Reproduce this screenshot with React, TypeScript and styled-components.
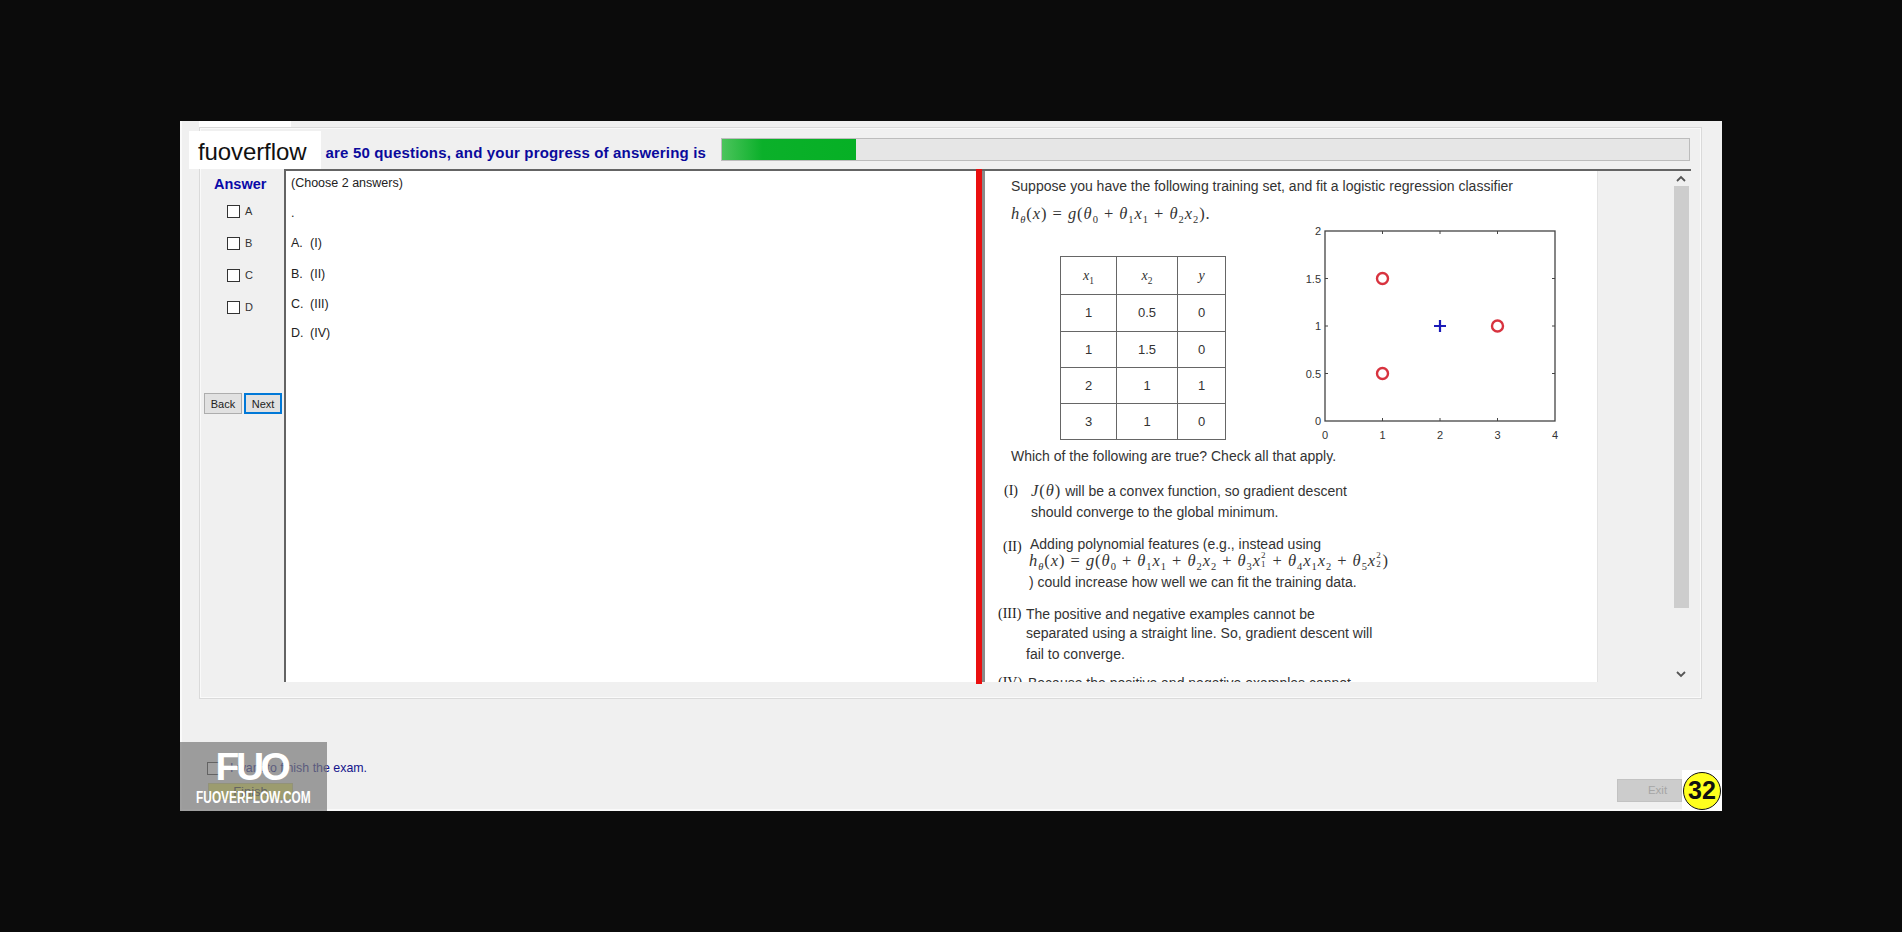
import React from "react";
import styled, { createGlobalStyle } from "styled-components";

const Global = createGlobalStyle`
  html, body { margin: 0; padding: 0; background: #0b0b0b; }
  body { font-family: "Liberation Sans", Arial, sans-serif; }
  * { box-sizing: border-box; }
`;
const Page = styled.div`
  width: 1902px; height: 932px; background: #0b0b0b; padding: 121px 180px 121px 180px; overflow: hidden;
`;
const Win = styled.div`
  position: relative; width: 1542px; height: 690px; background: #f0f0f0; display: flex; flex-direction: column;
  border-left: 2px solid #fafafa; border-bottom: 2px solid #fafafa;
`;
const TabStrip = styled.div`
  height: 6px; padding-left: 17px; flex: none;
`;
const Tab = styled.div`
  width: 92px; height: 6px; background: #fff;
`;
const TabPanel = styled.div`
  flex: none; height: 572px; margin: 0 20px 0 17px; border: 1px solid #dadada; box-shadow: inset 0 0 0 1px #fafafa;
  display: flex; flex-direction: column; padding: 2px 10px 16px 5px;
`;
const Header = styled.div`
  height: 39px; flex: none; display: flex; align-items: flex-start; padding-top: 8px;
`;
const HeaderText = styled.div`
  width: 501px; text-align: right; color: #0a0a9c; font-size: 15px; font-weight: 700; line-height: 18px;
  padding-top: 6px; letter-spacing: 0.17px; white-space: nowrap; overflow: hidden;
`;
const Progress = styled.div`
  margin-left: 15px; width: 969px; height: 23px; background: #e6e6e6; border: 1px solid #bcbcbc;
`;
const ProgressFill = styled.div`
  height: 100%; background: linear-gradient(90deg, #4cc45c 0%, #0bb02a 30%, #06b025 100%);
`;
const Main = styled.div`
  flex: 1; min-height: 0; display: flex;
`;
const AnswerCol = styled.div`
  width: 79px; flex: none; display: flex; flex-direction: column; padding-top: 7px;
`;
const AnswerTitle = styled.div`
  color: #0a0aa8; font-weight: 700; font-size: 14.5px; line-height: 16px; padding-left: 9px; margin-bottom: 12px;
`;
const Choice = styled.div`
  display: flex; align-items: center; height: 14px; margin: 0 0 18px 22px; gap: 5px;
  font-size: 11px; color: #333;
`;
const Box = styled.span`
  width: 13px; height: 13px; border: 1px solid #333; background: #fff; display: block; flex: none;
`;
const NavRow = styled.div`
  display: flex; gap: 2px; margin-top: 61px; margin-left: -1px;
`;
const NavBtn = styled.div<{ $focus?: boolean }>`
  width: 38px; height: 21px; background: #e1e1e1; border: ${(p) => (p.$focus ? "2px solid #0078d7" : "1px solid #adadad")};
  font-size: 11px; color: #222; display: flex; align-items: center; justify-content: center;
`;
const Question = styled.div`
  width: 692px; flex: none; background: #fff; border-left: 2px solid #646464; border-top: 2px solid #646464;
  padding: 3px 0 0 5px; font-size: 12.5px; color: #222;
`;
const QLine = styled.div<{ $h: number }>`
  height: ${(p) => p.$h}px; line-height: 18px; white-space: nowrap;
`;
const QKey = styled.span`
  display: inline-block; width: 19px;
`;
const Splitter = styled.div`
  width: 6px; flex: none; background: #ea0f0f; margin-bottom: -2px;
`;
const Viewer = styled.div`
  flex: 1; min-width: 0; display: flex; border-top: 2px solid #646464;
  overflow: hidden;
`;
const Sheet = styled.div`
  width: 616px; flex: none; background: #fff; border-left: 3px solid #8a8a8a; border-right: 1px solid #e3e3e3;
  overflow: hidden; color: #333; font-size: 14px; display: flex; flex-direction: column;
`;
const TextLine = styled.div<{ $top: number; $left: number }>`
  flex: none; height: 18px; line-height: 18px; margin-top: ${(p) => p.$top}px; padding-left: ${(p) => p.$left}px;
  white-space: nowrap; position: relative;
`;
const Roman = styled.span`
  position: absolute; font-family: "Liberation Serif", serif; font-size: 14px; color: #222;
`;
const MathText = styled.span`
  font-family: "Liberation Serif", serif; font-size: 16.5px; color: #333; letter-spacing: 0.95px;
  sub, sup { font-size: 10.5px; line-height: 0; }
  i { font-style: italic; }
`;
const Stack = styled.span`
  display: inline-flex; flex-direction: column; vertical-align: middle; font-size: 9px; line-height: 9px; margin: -4px 1px 0 0;
`;
const Figure = styled.div`
  flex: none; display: flex; height: 220px; margin-top: 2px; padding-left: 75px;
`;
const DataTable = styled.table`
  border-collapse: collapse; width: 165px; height: 184px; margin-top: 31px; flex: none; table-layout: fixed;
  border: 1.5px solid #333;
  td { border: 1px solid #666; text-align: center; font-size: 13px; color: #333; padding: 0; }
`;
const HeadCell = styled.td`
  font-family: "Liberation Serif", serif; font-style: italic; font-size: 14px !important;
  sub { font-size: 9.5px; line-height: 0; font-style: normal; }
`;
const PlotSvg = styled.svg`
  flex: none; margin-left: 73px; display: block;
`;
const ScrollArea = styled.div`
  flex: 1; background: #f0f0f0; display: flex; justify-content: flex-end; padding-right: 2px;
`;
const ScrollBar = styled.div`
  width: 16px; display: flex; flex-direction: column; align-items: center; color: #555;
`;
const ScrollBtn = styled.div`
  height: 15px; flex: none; display: flex; align-items: center; justify-content: center;
`;
const Thumb = styled.div`
  height: 422px; width: 15px; background: #cdcdcd; flex: none;
`;
const Spacer = styled.div`
  flex: 1;
`;
const Bottom = styled.div`
  flex: 1; display: flex; justify-content: space-between; padding: 61px 40px 0 25px;
`;
const FinishCol = styled.div`
  display: flex; flex-direction: column;
`;
const FinishRow = styled.div`
  display: flex; align-items: center; gap: 10px; height: 16px; color: #14148c; font-size: 12.4px; white-space: nowrap;
`;
const FinishBtn = styled.div`
  width: 85px; height: 17px; margin: 7px 0 0 1px; background: #f2f25c; border: 1px solid #d0d080;
  font-size: 13px; color: #333; text-align: center; line-height: 15px;
`;
const ExitBtn = styled.div`
  align-self: flex-end; width: 65px; height: 23px; margin-bottom: 7px; background: #cccccc; border: 1px solid #c2c2c2;
  color: #a6a6a6; font-size: 11.5px; text-align: center; line-height: 21px; padding-left: 16px;
`;
const Watermark = styled.div`
  position: absolute; left: 7px; top: 10px; width: 132px; height: 38px; background: #fff; color: #111;
  font-size: 24px; line-height: 42px; padding-left: 9px; letter-spacing: -0.1px; overflow: hidden;
`;
const LogoOverlay = styled.div`
  position: absolute; left: -2px; bottom: -2px; width: 147px; height: 69px; background: rgba(120, 120, 120, 0.7);
  color: #fff; display: flex; flex-direction: column; align-items: center;
`;
const LogoBig = styled.div`
  font-size: 39px; font-weight: 700; line-height: 36px; height: 40px; margin-top: 7px; letter-spacing: -3.5px; padding-right: 4px;
`;
const LogoSmall = styled.div`
  font-weight: 700; font-size: 16px; line-height: 18px; white-space: nowrap; transform: scaleX(0.74);
`;
const BadgeBox = styled.div`
  position: absolute; right: 0; bottom: -2px; width: 40px; height: 41px; background: #fff;
  display: flex; align-items: center; justify-content: center;
`;
const Badge = styled.div`
  width: 38px; height: 38px; border-radius: 50%; background: #ffff1e; border: 1.5px solid #111; color: #111;
  font-weight: 700; font-size: 25px; display: flex; align-items: center; justify-content: center;
`;

const rows = [["1", "0.5", "0"], ["1", "1.5", "0"], ["2", "1", "1"], ["3", "1", "0"]];
const Chevron = ({ up }: { up?: boolean }) => (
  <svg width="10" height="7" viewBox="0 0 10 7">
    <path d={up ? "M1 6 L5 2 L9 6" : "M1 1 L5 5 L9 1"} fill="none" stroke="#555" strokeWidth="1.8" />
  </svg>
);

const Plot = () => {
  const X = (v: number) => 26 + v * 57.5;
  const Y = (v: number) => 196 - v * 95;
  const t = { fontFamily: "Liberation Sans", fontSize: 11, fill: "#333" };
  return (
    <PlotSvg width="270" height="220" viewBox="0 0 270 220">
      <rect x="26" y="6" width="230" height="190" fill="none" stroke="#444" strokeWidth="1.3" />
      {[1, 2, 3].map((v) => (
        <g key={v} stroke="#444">
          <line x1={X(v)} x2={X(v)} y1="196" y2="193" />
          <line x1={X(v)} x2={X(v)} y1="6" y2="9" />
        </g>
      ))}
      {[0.5, 1, 1.5].map((v) => (
        <g key={v} stroke="#444">
          <line x1="26" x2="29" y1={Y(v)} y2={Y(v)} />
          <line x1="256" x2="253" y1={Y(v)} y2={Y(v)} />
        </g>
      ))}
      {[0, 1, 2, 3, 4].map((v) => (
        <text key={v} x={X(v)} y="214" textAnchor="middle" {...t}>{v}</text>
      ))}
      {[["0", 0], ["0.5", 0.5], ["1", 1], ["1.5", 1.5], ["2", 2]].map(([l, v]) => (
        <text key={l as string} x="22" y={Y(v as number) + 4} textAnchor="end" {...t}>{l}</text>
      ))}
      {[[1, 1.5], [3, 1], [1, 0.5]].map(([a, b]) => (
        <circle key={`${a}${b}`} cx={X(a)} cy={Y(b)} r="5.5" fill="none" stroke="#d8333f" strokeWidth="2.4" />
      ))}
      <path d={`M${X(2) - 6} ${Y(1)} H${X(2) + 6} M${X(2)} ${Y(1) - 6} V${Y(1) + 6}`} stroke="#1a1ab8" strokeWidth="2.2" fill="none" />
    </PlotSvg>
  );
};

export default function App() {
  return (
    <Page>
      <Global />
      <Win>
        <TabStrip><Tab /></TabStrip>
        <TabPanel>
          <Header>
            <HeaderText>There are 50 questions, and your progress of answering is</HeaderText>
            <Progress><ProgressFill style={{ width: `${(134 / 967) * 100}%` }} /></Progress>
          </Header>
          <Main>
            <AnswerCol>
              <AnswerTitle>Answer</AnswerTitle>
              {["A", "B", "C", "D"].map((c) => (
                <Choice key={c}><Box />{c}</Choice>
              ))}
              <NavRow><NavBtn>Back</NavBtn><NavBtn $focus>Next</NavBtn></NavRow>
            </AnswerCol>
            <Question>
              <QLine $h={30}>(Choose 2 answers)</QLine>
              <QLine $h={30}>.</QLine>
              <QLine $h={31}><QKey>A.</QKey>(I)</QLine>
              <QLine $h={30}><QKey>B.</QKey>(II)</QLine>
              <QLine $h={29}><QKey>C.</QKey>(III)</QLine>
              <QLine $h={30}><QKey>D.</QKey>(IV)</QLine>
            </Question>
            <Splitter />
            <Viewer>
              <Sheet>
                <TextLine $top={6} $left={26}>Suppose you have the following training set, and fit a logistic regression classifier</TextLine>
                <TextLine $top={10} $left={26}>
                  <MathText><i>h</i><sub><i>θ</i></sub>(<i>x</i>) = <i>g</i>(<i>θ</i><sub>0</sub> + <i>θ</i><sub>1</sub><i>x</i><sub>1</sub> + <i>θ</i><sub>2</sub><i>x</i><sub>2</sub>).</MathText>
                </TextLine>
                <Figure>
                  <DataTable>
                    <colgroup><col style={{ width: 56 }} /><col style={{ width: 61 }} /><col style={{ width: 48 }} /></colgroup>
                    <tbody>
                      <tr><HeadCell>x<sub>1</sub></HeadCell><HeadCell>x<sub>2</sub></HeadCell><HeadCell>y</HeadCell></tr>
                      {rows.map((r, i) => (
                        <tr key={i}>{r.map((c, j) => <td key={j}>{c}</td>)}</tr>
                      ))}
                    </tbody>
                  </DataTable>
                  <Plot />
                </Figure>
                <TextLine $top={2} $left={26}>Which of the following are true? Check all that apply.</TextLine>
                <TextLine $top={17} $left={46}>
                  <Roman style={{ left: 19 }}>(I)</Roman>
                  <MathText><i>J</i>(<i>θ</i>)</MathText> will be a convex function, so gradient descent
                </TextLine>
                <TextLine $top={3} $left={46}>should converge to the global minimum.</TextLine>
                <TextLine $top={14} $left={45}>
                  <Roman style={{ left: 18, top: 3 }}>(II)</Roman>
                  Adding polynomial features (e.g., instead using
                </TextLine>
                <TextLine $top={-1} $left={44}>
                  <MathText>
                    <i>h</i><sub><i>θ</i></sub>(<i>x</i>) = <i>g</i>(<i>θ</i><sub>0</sub> + <i>θ</i><sub>1</sub><i>x</i><sub>1</sub> + <i>θ</i><sub>2</sub><i>x</i><sub>2</sub> + <i>θ</i><sub>3</sub><i>x</i><Stack><span>2</span><span>1</span></Stack> + <i>θ</i><sub>4</sub><i>x</i><sub>1</sub><i>x</i><sub>2</sub> + <i>θ</i><sub>5</sub><i>x</i><Stack><span>2</span><span>2</span></Stack>)
                  </MathText>
                </TextLine>
                <TextLine $top={3} $left={44}>) could increase how well we can fit the training data.</TextLine>
                <TextLine $top={14} $left={41}>
                  <Roman style={{ left: 13 }}>(III)</Roman>
                  The positive and negative examples cannot be
                </TextLine>
                <TextLine $top={1} $left={41}>separated using a straight line. So, gradient descent will</TextLine>
                <TextLine $top={3} $left={41}>fail to converge.</TextLine>
                <TextLine $top={11} $left={43}>
                  <Roman style={{ left: 13 }}>(IV)</Roman>
                  Because the positive and negative examples cannot
                </TextLine>
              </Sheet>
              <ScrollArea>
                <ScrollBar>
                  <ScrollBtn><Chevron up /></ScrollBtn>
                  <Thumb />
                  <Spacer />
                  <ScrollBtn><Chevron /></ScrollBtn>
                </ScrollBar>
              </ScrollArea>
            </Viewer>
          </Main>
        </TabPanel>
        <Bottom>
          <FinishCol>
            <FinishRow><Box />I want to finish the exam.</FinishRow>
            <FinishBtn>Finish</FinishBtn>
          </FinishCol>
          <ExitBtn>Exit</ExitBtn>
        </Bottom>
        <Watermark>fuoverflow</Watermark>
        <LogoOverlay>
          <LogoBig>FUO</LogoBig>
          <LogoSmall>FUOVERFLOW.COM</LogoSmall>
        </LogoOverlay>
        <BadgeBox><Badge>32</Badge></BadgeBox>
      </Win>
    </Page>
  );
}
